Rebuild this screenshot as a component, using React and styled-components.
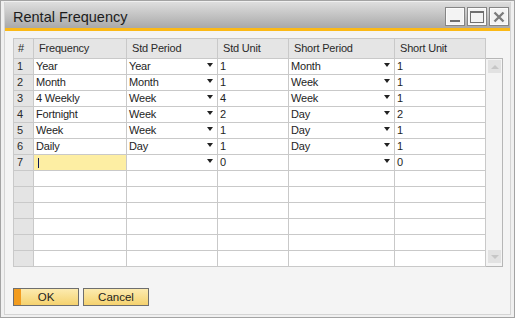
import React from 'react';
import styled, { createGlobalStyle } from 'styled-components';

const GlobalStyle = createGlobalStyle`
    html, body {
        margin: 0;
        padding: 0;
        background: #ffffff;
    }
    * {
        box-sizing: border-box;
    }
`;

const Window = styled.div`
    width: 515px;
    height: 318px;
    border: 1px solid #a3a3a3;
    background: #f0f0f0;
    padding: 1px 3px 2px 3px;
    display: flex;
    font-family: "Liberation Sans", Arial, sans-serif;
    color: #1e1e1e;
`;

const Inner = styled.div`
    flex: 1;
    display: flex;
    flex-direction: column;
    border: 1px solid #d4d4d4;
    border-top: none;
    background: #f4f4f4;
`;

const TitleBar = styled.div`
    height: 26px;
    display: flex;
    align-items: flex-start;
    justify-content: space-between;
    padding: 0 1px 0 8px;
    background: linear-gradient(#dedede, #a9a9a9);
`;

const Title = styled.div`
    font-size: 14.5px;
    line-height: 26px;
    padding-top: 2px;
    color: #1c1c1c;
`;

const WinButtons = styled.div`
    display: flex;
    gap: 2px;
    padding-top: 5px;
`;

const WinButton = styled.div`
    width: 20px;
    height: 19px;
    border: 1px solid #858585;
    background: #f3f3f3;
    box-shadow: inset 0 0 0 1px #fbfbfb;
    display: flex;
    align-items: center;
    justify-content: center;
`;

const Accent = styled.div`
    height: 3px;
    background: #fbb917;
`;

const Body = styled.div`
    flex: 1;
    display: flex;
    flex-direction: column;
    padding: 7px 0 8px 8px;
`;

const GridArea = styled.div`
    display: flex;
    align-items: flex-start;
`;

const Table = styled.div`
    display: grid;
    grid-template-columns: 19px 92px 90px 70px 105px 90px;
    grid-template-rows: 19px;
    grid-auto-rows: 15px;
    gap: 1px;
    background: #c9c9c9;
    border: 1px solid #c9c9c9;
    font-size: 11px;
    letter-spacing: -0.2px;
`;

const HeaderCell = styled.div`
    background: #e5e5e5;
    padding-left: ${(p) => (p.$narrow ? '4px' : '5px')};
    line-height: 19px;
    color: #2a2a2a;
    white-space: nowrap;
    overflow: hidden;
`;

const RowNum = styled.div`
    background: #e4e4e4;
    padding-left: 3px;
    line-height: 15px;
    color: #2a2a2a;
`;

const Cell = styled.div`
    background: ${(p) => (p.$active ? '#fdeea3' : '#ffffff')};
    padding-left: 2px;
    line-height: 15px;
    display: flex;
    align-items: center;
    justify-content: space-between;
    white-space: nowrap;
    overflow: hidden;
`;

const Caret = styled.span`
    width: 1px;
    height: 10px;
    margin-left: 2px;
    background: #0b1a5c;
`;

const Arrow = styled.span`
    width: 0;
    height: 0;
    margin: 0 4px 3px 0;
    border-left: 3.5px solid transparent;
    border-right: 3.5px solid transparent;
    border-top: 4px solid #222222;
`;

const Scrollbar = styled.div`
    margin-top: 20px;
    width: 17px;
    height: 209px;
    border: 1px solid #b6b6b6;
    border-left: none;
    background: #f4f4f4;
    display: flex;
    flex-direction: column;
    justify-content: space-between;
    padding: 1px 1px 3px 2px;
`;

const ScrollButton = styled.div`
    width: 13px;
    height: 13px;
    background: #e2e2e2;
    display: flex;
    align-items: center;
    justify-content: center;
`;

const ScrollArrow = styled.span`
    width: 0;
    height: 0;
    border-left: 4px solid transparent;
    border-right: 4px solid transparent;
    ${(p) =>
        p.$up
            ? 'border-bottom: 4px solid #c6c6c6;'
            : 'border-top: 4px solid #c6c6c6;'}
`;

const ButtonRow = styled.div`
    margin-top: auto;
    display: flex;
    gap: 4px;
    padding-left: 0;
`;

const Button = styled.button`
    position: relative;
    width: 66px;
    height: 18px;
    padding: 0;
    border: 1px solid #6e6e6e;
    background: linear-gradient(#fcebb0, #f5d26f);
    font-family: "Liberation Sans", Arial, sans-serif;
    font-size: 11.5px;
    color: #1e1e1e;
    display: flex;
    align-items: center;
    justify-content: center;
    ${(p) =>
        p.$default &&
        `box-shadow: inset 7px 0 0 #f29c1f;`}
`;

const columns = ['Frequency', 'Std Period', 'Std Unit', 'Short Period', 'Short Unit'];

const rows = [
    ['Year', 'Year', '1', 'Month', '1'],
    ['Month', 'Month', '1', 'Week', '1'],
    ['4 Weekly', 'Week', '4', 'Week', '1'],
    ['Fortnight', 'Week', '2', 'Day', '2'],
    ['Week', 'Week', '1', 'Day', '1'],
    ['Daily', 'Day', '1', 'Day', '1'],
    ['', '', '0', '', '0'],
];

const EMPTY_ROWS = 6;

const MinIcon = () => (
    <svg width="14" height="14" viewBox="0 0 14 14">
        <rect x="2" y="10" width="10" height="2" fill="#6f6f6f" />
    </svg>
);

const MaxIcon = () => (
    <svg width="14" height="14" viewBox="0 0 14 14">
        <rect x="0.5" y="1.5" width="13" height="11" fill="none" stroke="#6f6f6f" />
        <rect x="0" y="1" width="14" height="2" fill="#6f6f6f" />
    </svg>
);

const CloseIcon = () => (
    <svg width="14" height="14" viewBox="0 0 14 14">
        <path d="M2.5 2.5 L11.5 11.5 M11.5 2.5 L2.5 11.5" stroke="#7c7c7c" strokeWidth="2.4" />
    </svg>
);

const App = () => (
    <>
        <GlobalStyle />
        <Window>
            <Inner>
                <TitleBar>
                    <Title>Rental Frequency</Title>
                    <WinButtons>
                        <WinButton><MinIcon /></WinButton>
                        <WinButton><MaxIcon /></WinButton>
                        <WinButton><CloseIcon /></WinButton>
                    </WinButtons>
                </TitleBar>
                <Accent />
                <Body>
                    <GridArea>
                        <Table>
                            <HeaderCell $narrow>#</HeaderCell>
                            {columns.map((c) => (
                                <HeaderCell key={c}>{c}</HeaderCell>
                            ))}
                            {rows.map((r, i) => (
                                <React.Fragment key={i}>
                                    <RowNum>{i + 1}</RowNum>
                                    <Cell $active={i === 6}>
                                        {i === 6 ? <Caret /> : r[0]}
                                    </Cell>
                                    <Cell>
                                        <span>{r[1]}</span>
                                        <Arrow />
                                    </Cell>
                                    <Cell>{r[2]}</Cell>
                                    <Cell>
                                        <span>{r[3]}</span>
                                        <Arrow />
                                    </Cell>
                                    <Cell>{r[4]}</Cell>
                                </React.Fragment>
                            ))}
                            {Array.from({ length: EMPTY_ROWS }).map((_, i) => (
                                <React.Fragment key={`e${i}`}>
                                    <RowNum />
                                    <Cell />
                                    <Cell />
                                    <Cell />
                                    <Cell />
                                    <Cell />
                                </React.Fragment>
                            ))}
                        </Table>
                        <Scrollbar>
                            <ScrollButton><ScrollArrow $up /></ScrollButton>
                            <ScrollButton><ScrollArrow /></ScrollButton>
                        </Scrollbar>
                    </GridArea>
                    <ButtonRow>
                        <Button $default>OK</Button>
                        <Button>Cancel</Button>
                    </ButtonRow>
                </Body>
            </Inner>
        </Window>
    </>
);

export default App;
